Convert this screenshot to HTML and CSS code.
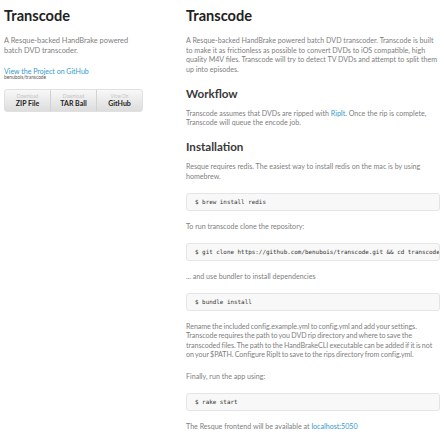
FILE: index.html
```html
<!DOCTYPE html>
<html>
<head>
<meta charset="utf-8">
<title>Transcode</title>
<link rel="stylesheet" href="styles.css">
</head>
<body>
<div class="wrapper">
  <header class="sidebar">
    <h1 class="side-title">Transcode</h1>
    <p class="side-desc">A Resque-backed HandBrake powered batch DVD transcoder.</p>
    <p class="view"><a href="#">View the Project on GitHub</a><small>benubois/transcode</small></p>
    <ul class="downloads">
      <li><a href="#">Download <strong>ZIP File</strong></a></li>
      <li><a href="#">Download <strong>TAR Ball</strong></a></li>
      <li><a href="#">View On <strong>GitHub</strong></a></li>
    </ul>
  </header>
  <section class="main">
    <h1 class="title">Transcode</h1>
    <p>A Resque-backed HandBrake powered batch DVD transcoder. Transcode is built to make it as frictionless as possible to convert DVDs to iOS compatible, high quality M4V files. Transcode will try to detect TV DVDs and attempt to split them up into episodes.</p>
    <h2>Workflow</h2>
    <p>Transcode assumes that DVDs are ripped with <a href="#">RipIt</a>. Once the rip is complete, Transcode will queue the encode job.</p>
    <h2>Installation</h2>
    <p>Resque requires redis. The easiest way to install redis on the mac is by using homebrew.</p>
    <pre><code>$ brew install redis</code></pre>
    <p>To run transcode clone the repository:</p>
    <pre><code>$ git clone https://github.com/benubois/transcode.git &amp;&amp; cd transcode</code></pre>
    <p>... and use bundler to install dependencies</p>
    <pre><code>$ bundle install</code></pre>
    <p class="tight">Rename the included config.example.yml to config.yml and add your settings. Transcode requires the path to you DVD rip directory and where to save the transcoded files. The path to the HandBrakeCLI executable can be added if it is not on your $PATH. Configure RipIt to save to the rips directory from config.yml.</p>
    <p>Finally, run the app using:</p>
    <pre><code>$ rake start</code></pre>
    <p>The Resque frontend will be available at <a href="#">localhost:5050</a></p>
  </section>
</div>
</body>
</html>
```

FILE: styles.css
```css
* { box-sizing: border-box; }
html, body { margin: 0; padding: 0; background: #fff; }
body {
  font-family: Lato, "Open Sans", sans-serif;
  font-weight: 400;
  font-size: 7.1px;
  line-height: 9.5px;
  color: #808080;
}
a { color: #39c; text-decoration: none; }
.wrapper {
  display: flex;
  justify-content: space-between;
  align-items: flex-start;
  padding: 8px 4px 0 4px;
}
.sidebar { width: 139px; }
.main { width: 254px; }
h1, h2 { color: #222; margin: 0; font-weight: 700; }
h1 { font-size: 14.6px; line-height: 16px; margin-bottom: 12px; }
h2 { font-size: 11.6px; line-height: 13px; margin: 0 0 9px; color: #393939; }
p + h2 { padding-top: 1px; }
p { margin: 0 0 11.5px; }
.tight { word-spacing: -0.5px; letter-spacing: -0.04px; margin-bottom: 12.5px; }
.side-desc { font-size: 7.4px; margin-bottom: 12px; }
.view { font-size: 7px; line-height: 8px; margin-bottom: 9px; }
.view small { display: block; font-size: 4.8px; line-height: 5px; color: #555; }
pre {
  margin: 0 0 11px;
  padding: 4px 8px;
  background: #f8f8f8;
  border: 1px solid #e5e5e5;
  border-radius: 3px;
  overflow: hidden;
  white-space: pre;
}
code {
  font-family: "DejaVu Sans Mono", "Liberation Mono", monospace;
  font-size: 5.9px;
  line-height: 8px;
  color: #333;
}
pre code { display: block; }
.downloads {
  list-style: none;
  margin: 0;
  padding: 0;
  display: flex;
  width: 139px;
  height: 23px;
  border: 1px solid #e0e0e0;
  border-radius: 3px;
  background: linear-gradient(#f8f8f8, #dddddd);
  overflow: hidden;
}
.downloads li { flex: 1; border-right: 1px solid #d2d2d2; }
.downloads li:last-child { border-right: none; }
.downloads a {
  display: block;
  text-align: center;
  color: #999;
  font-size: 4.8px;
  line-height: 5px;
  padding-top: 4px;
  height: 100%;
  font-weight: 300;
}
.downloads strong { display: block; color: #222; font-size: 7px; line-height: 8px; font-weight: 700; }
```
